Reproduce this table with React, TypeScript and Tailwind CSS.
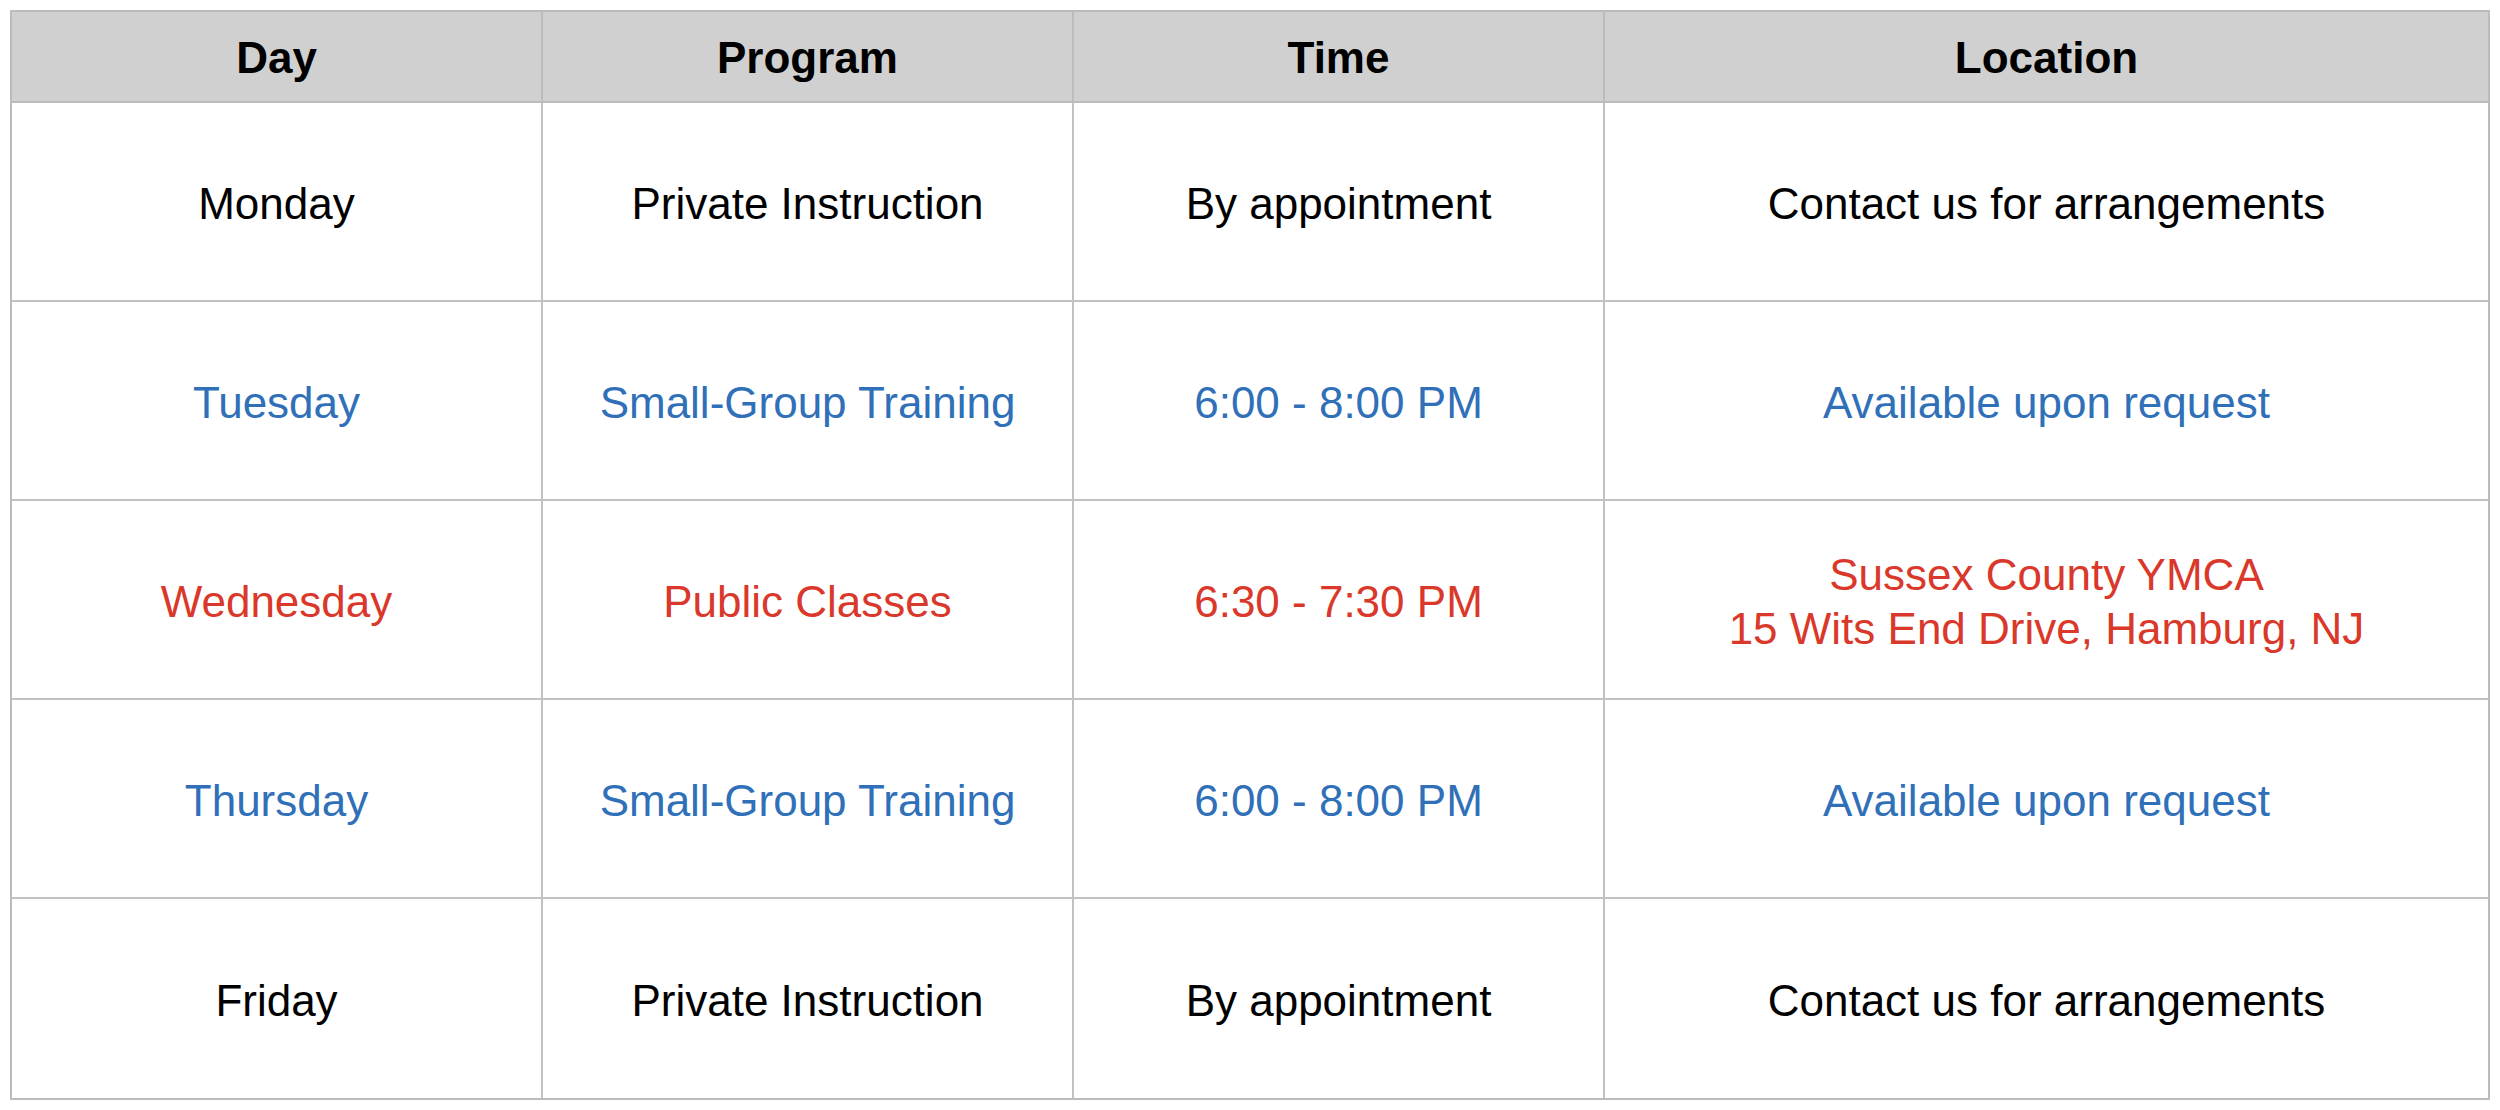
import React from 'react';

type Row = {
  day: string;
  program: string;
  time: string;
  location: string[];
  tone: 'black' | 'blue' | 'red';
};

const rows: Row[] = [
  { day: 'Monday', program: 'Private Instruction', time: 'By appointment', location: ['Contact us for arrangements'], tone: 'black' },
  { day: 'Tuesday', program: 'Small-Group Training', time: '6:00 - 8:00 PM', location: ['Available upon request'], tone: 'blue' },
  { day: 'Wednesday', program: 'Public Classes', time: '6:30 - 7:30 PM', location: ['Sussex County YMCA', '15 Wits End Drive, Hamburg, NJ'], tone: 'red' },
  { day: 'Thursday', program: 'Small-Group Training', time: '6:00 - 8:00 PM', location: ['Available upon request'], tone: 'blue' },
  { day: 'Friday', program: 'Private Instruction', time: 'By appointment', location: ['Contact us for arrangements'], tone: 'black' },
];

const toneClass = {
  black: 'text-black',
  blue: 'text-[#3070b8]',
  red: 'text-[#d9382a]',
};

const headers = ['Day', 'Program', 'Time', 'Location'];

export default function App() {
  return (
    <div className="w-[2500px] h-[1110px] bg-white p-[10px] font-['Liberation_Sans',Arial,sans-serif] text-[44px] leading-[1.22]">
      <div className="w-[2480px] h-[1090px] border-2 border-[#bcbcbc] grid grid-cols-[531px_531px_531px_1fr] grid-rows-[91px_repeat(5,1fr)]">
        {headers.map((h, i) => (
          <div
            key={h}
            className={`bg-[#d0d0d0] font-bold text-black flex items-center justify-center pt-[3px] border-b-2 border-[#bcbcbc] ${i < 3 ? 'border-r-2' : ''}`}
          >
            {h}
          </div>
        ))}
        {rows.map((r, ri) => {
          const last = ri === rows.length - 1;
          const cells = [[r.day], [r.program], [r.time], r.location];
          return cells.map((lines, ci) => (
            <div
              key={`${ri}-${ci}`}
              className={`flex flex-col items-center justify-center text-center pt-[5px] border-[#c2c2c2] ${toneClass[r.tone]} ${ci < 3 ? 'border-r-2' : ''} ${last ? '' : 'border-b-2'}`}
            >
              {lines.map((l) => (
                <span key={l}>{l}</span>
              ))}
            </div>
          ));
        })}
      </div>
    </div>
  );
}
